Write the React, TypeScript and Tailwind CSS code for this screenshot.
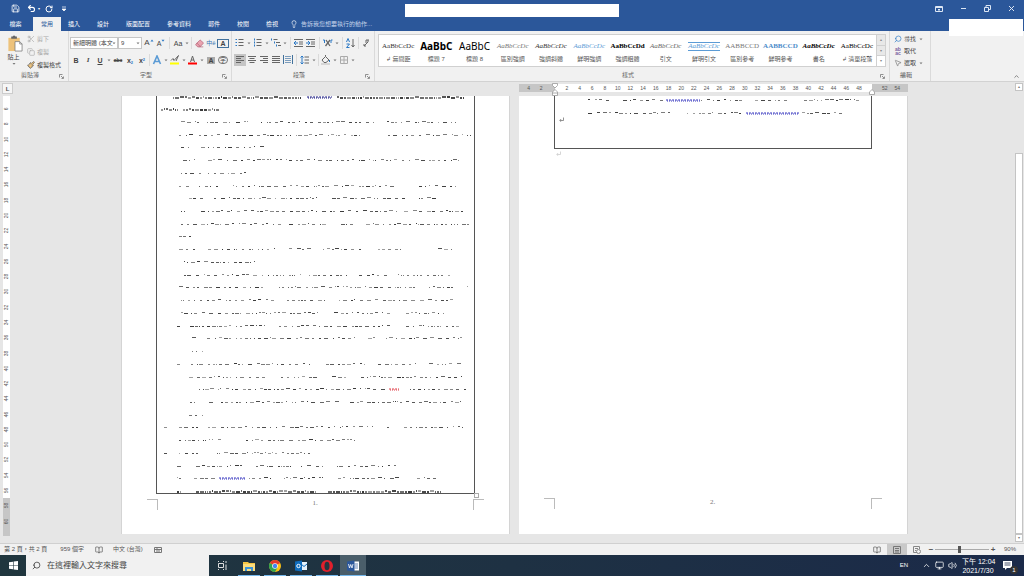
import React from 'react';
import {
  Search,
  Scissors,
  Copy,
  Paintbrush,
  Lightbulb,
  Save,
  Undo2,
  RotateCw,
  ChevronUp,
  Volume2,
  Monitor,
  Eraser,
  MousePointer2,
  BookOpen,
} from 'lucide-react';

const tabs = ['插入', '設計', '版面配置', '參考資料', '郵件', '校閱', '檢視'];

const styles = [
  { name: '↲ 無間距', sample: 'AaBbCcDc', look: 'text-[7px] text-[#333]' },
  { name: '標題 7', sample: 'AaBbC', look: 'font-["Noto_Sans"] text-[10px] font-bold text-black' },
  { name: '標題 8', sample: 'AaBbC', look: 'font-["Noto_Sans"] text-[10px] text-black' },
  { name: '區別強調', sample: 'AaBbCcDc', look: 'text-[7px] italic text-[#777]' },
  { name: '強調斜體', sample: 'AaBbCcDc', look: 'text-[7px] italic text-[#333]' },
  { name: '鮮明強調', sample: 'AaBbCcDc', look: 'text-[7px] italic text-[#5b9bd5]' },
  { name: '強調粗體', sample: 'AaBbCcDd', look: 'text-[7px] font-bold text-black' },
  { name: '引文', sample: 'AaBbCcDc', look: 'text-[7px] italic text-[#666]' },
  { name: '鮮明引文', sample: 'AaBbCcDc', look: 'text-[7px] italic text-[#5b9bd5] border-y border-[#5b9bd5]' },
  { name: '區別參考', sample: 'AABBCCD', look: 'text-[7px] text-[#777]' },
  { name: '鮮明參考', sample: 'AABBCCD', look: 'text-[7px] font-bold text-[#4a8bc9]' },
  { name: '書名', sample: 'AaBbCcDc', look: 'text-[7px] font-bold italic text-black' },
  { name: '↲ 清單段落', sample: 'AaBbCcDc', look: 'text-[7px] text-black' },
];

// each row: [start, end] stretches of ink, measured from the table border
const firstPage: number[][][] = [
  [[24, 44], [50, 74], [79, 92], [104, 218], [230, 299]],
  [[22, 37], [42, 63], [68, 204], [231, 314]],
  [[24, 34], [44, 108]],
  [[26, 38], [51, 302]],
  [[24, 44], [51, 89]],
  [[22, 34], [42, 62], [76, 239], [262, 302]],
  [[32, 46], [57, 160], [175, 250], [262, 280]],
  [[24, 30], [44, 241], [247, 306]],
  [[24, 124], [132, 171], [184, 196], [209, 314]],
  [[22, 38]],
  [[22, 39], [51, 119], [132, 154], [166, 209], [221, 244], [281, 297]],
  [[27, 99]],
  [[27, 144], [152, 191], [202, 230], [241, 296]],
  [[22, 109], [122, 259], [272, 296], [310, 314]],
  [[24, 117], [130, 170], [182, 296]],
  [[24, 162], [177, 234], [249, 289]],
  [[20, 23], [33, 109], [122, 234], [249, 305]],
  [[35, 39], [50, 199], [211, 218], [229, 305]],
  [[35, 46]],
  [[20, 24], [34, 154], [169, 208], [221, 259], [272, 305]],
  [[32, 110], [124, 162], [175, 189], [204, 305]],
  [[42, 229], [253, 310]],
  [[33, 39], [52, 57], [64, 182], [193, 306]],
  [[32, 46]],
  [[7, 10], [22, 41], [51, 216], [230, 234], [247, 306]],
  [[22, 64], [89, 199]],
  [[7, 10], [22, 41], [60, 154]],
  [[20, 24], [39, 89], [99, 134], [144, 166], [180, 240]],
  [[20, 24], [37, 59], [92, 114], [127, 169], [181, 247], [260, 284]],
  [[20, 24], [39, 159], [171, 284]],
];

const marksOf = (spans: number[][], seed: number, dense: boolean) => {
  const marks: { x: number; y: number; w: number; o: number }[] = [];
  let s = seed * 7919 + 13;
  const next = () => {
    s = (s * 1103515245 + 12345) % 2147483648;
    return s / 2147483648;
  };
  spans.forEach(([from, to]) => {
    let x = from;
    while (x < to) {
      const w = Math.min(to - x, 1 + Math.floor(next() * 4));
      marks.push({ x, y: next() > 0.75 ? 0 : 1, w, o: 0.4 + next() * 0.5 });
      x += w + (dense ? 1 : 1 + Math.floor(next() * 5));
    }
  });
  return marks;
};

type InkProps = { spans: number[][]; seed: number; dense?: boolean; squiggle?: [number, number, string] };

const Ink: React.FC<InkProps> = ({ spans, seed, dense = false, squiggle }) => (
  <svg className="block h-[3px] w-full" aria-hidden="true">
    {marksOf(spans, seed, dense).map((m, i) => (
      <rect key={i} x={m.x} y={m.y} width={m.w} height={dense ? 2 : 1} fill="#222" opacity={m.o} />
    ))}
    {squiggle && (
      <g fill="none" stroke={squiggle[2]}>
        <path d={`M${squiggle[0]} 1H${squiggle[1]}`} strokeWidth="1" strokeDasharray="2 1" />
        <path d={`M${squiggle[0] + 1} 2H${squiggle[1]}`} strokeWidth="1" strokeDasharray="1 1" />
      </g>
    )}
  </svg>
);

const Caret = () => (
  <svg viewBox="0 0 6 12" className="h-3 w-[6px] shrink-0" aria-hidden="true">
    <path d="M1.500 5.500h3L3 7.200z" fill="#777" />
  </svg>
);

const Sep = ({ wide = false }: { wide?: boolean }) => (
  <span className={`flex h-3 shrink-0 justify-center ${wide ? 'w-[5px]' : 'w-[3px]'}`}>
    <span className="w-px bg-[#dadada]" />
  </span>
);

type ToolProps = { label: string; active?: boolean; children: React.ReactNode };

const Tool: React.FC<ToolProps> = ({ label, active, children }) => (
  <button
    type="button"
    aria-label={label}
    className={`flex h-3 w-3 shrink-0 items-center justify-center text-[7px] leading-none text-[#444] ${active ? 'bg-[#c5c5c5]' : ''}`}
  >
    {children}
  </button>
);

const Glyph = ({ children }: { children: React.ReactNode }) => (
  <svg viewBox="0 0 10 10" className="h-[10px] w-[10px]" fill="none" stroke="#666" strokeWidth="1" aria-hidden="true">
    {children}
  </svg>
);

const Launcher = () => (
  <svg viewBox="0 0 5 5" className="absolute right-1 bottom-[2px] h-[5px] w-[5px]" fill="none" stroke="#777" strokeWidth="0.8" aria-hidden="true">
    <path d="M.5 3.500v-3h3M2 2l2 2M4.500 2.500v2h-2" />
  </svg>
);

const ReturnMark = ({ className }: { className: string }) => (
  <svg viewBox="0 0 5 5" className={`h-[5px] w-[5px] ${className}`} fill="none" stroke="currentColor" strokeWidth="0.8" aria-hidden="true">
    <path d="M4.500.500v3H1M2.200 2L.7 3.500l1.500 1.200" />
  </svg>
);

type GroupProps = { title: string; width: string; launcher?: boolean; children: React.ReactNode };

const Group: React.FC<GroupProps> = ({ title, width, launcher = true, children }) => (
  <section aria-label={title} className={`flex flex-col border-r border-[#dadada] ${width}`}>
    <div className="h-[39px]">{children}</div>
    <div className="relative flex h-[11px] items-center justify-center pr-2 text-[#666]">
      {title}
      {launcher && <Launcher />}
    </div>
  </section>
);

const TitleBar = () => (
  <header className="relative bg-[#2b579a] text-white">
    <div className="grid h-[17px] grid-cols-3 items-center">
      <div className="flex items-center pl-[11px]">
        <button type="button" aria-label="儲存檔案"><Save size={9} /></button>
        <button type="button" aria-label="復原" className="ml-[7px]"><Undo2 size={9} strokeWidth={3} /></button>
        <span className="ml-[2px] text-[4px]">▾</span>
        <button type="button" aria-label="重複" className="ml-[5px]"><RotateCw size={8} strokeWidth={3} /></button>
        <svg viewBox="0 0 4 6" className="ml-[9px] h-[6px] w-1" aria-hidden="true">
          <path d="M0 1h4M0 3h4L2 5z" stroke="#fff" strokeWidth="0.7" fill="#fff" />
        </svg>
      </div>
      <div className="mx-auto mt-1 h-[13px] w-[214px] bg-white" />
      <div className="flex items-center justify-end gap-[17px] pr-[9px] text-[#dce6f4]">
        <button type="button" aria-label="功能區顯示選項">
          <svg viewBox="0 0 8 8" className="h-2 w-2" fill="none" stroke="currentColor">
            <path d="M.5 1.500h7v5h-7zM.5 2.500h7M4 6V4M3 5l1-1 1 1" />
          </svg>
        </button>
        <button type="button" aria-label="最小化">
          <svg viewBox="0 0 7 7" className="h-[7px] w-[7px]" stroke="currentColor"><path d="M1 3.500h5" /></svg>
        </button>
        <button type="button" aria-label="往下還原">
          <svg viewBox="0 0 7 7" className="h-[7px] w-[7px]" fill="none" stroke="currentColor"><path d="M.5 2.500h4v4h-4zM2 2.500v-2h4.500v4H4.500" /></svg>
        </button>
        <button type="button" aria-label="關閉">
          <svg viewBox="0 0 7 7" className="h-[7px] w-[7px]" stroke="currentColor"><path d="M1 1l5 5M6 1L1 6" /></svg>
        </button>
      </div>
    </div>
    <nav className="flex h-[14px] items-stretch text-[6px]">
      <button type="button" className="w-[33px] pr-[2px]">檔案</button>
      <button type="button" className="w-7 bg-[#f1f1f1] text-[#2b579a]">常用</button>
      <div className="flex items-center gap-[17px] pl-[7px]">
        {tabs.map((t) => (
          <button key={t} type="button">{t}</button>
        ))}
      </div>
      <label className="ml-3 flex items-center gap-[3px] text-[#c5d4ea]">
        <Lightbulb size={8} className="text-white" />
        <input
          aria-label="操作說明搜尋"
          placeholder="告訴我您想要執行的動作..."
          className="w-20 bg-transparent outline-none placeholder:text-[#c5d4ea]"
        />
      </label>
    </nav>
    <div className="absolute top-[19px] right-px z-10 h-[17px] w-[74px] bg-white" />
  </header>
);

const Clipboard = () => (
  <div className="flex pt-1">
    <button type="button" className="flex w-[27px] flex-col items-center text-[#444]">
      <svg viewBox="0 0 16 18" className="ml-[2px] h-[17px] w-4" aria-hidden="true">
        <path d="M1 3h12v14H1z" fill="#edc27b" />
        <path d="M4 1.500h1.500Q7-.5 8.500 1.500H10V4H4z" fill="#666" />
        <path d="M8 7h5l2.500 2.500V17H8z" fill="#fff" stroke="#777" strokeWidth=".8" />
        <path d="M13 7v2.500h2.500" fill="none" stroke="#777" strokeWidth=".8" />
      </svg>
      <span className="mt-px leading-[8px]">貼上</span>
      <svg viewBox="0 0 4 4" className="mt-px h-1 w-1"><path d="M.5 1h3L2 2.800z" fill="#777" /></svg>
    </button>
    <div className="flex flex-col gap-1 text-[#aaa]">
      <button type="button" className="flex h-2 items-center gap-[2px]"><Scissors size={8} />剪下</button>
      <button type="button" className="mt-px flex h-2 items-center gap-[2px]"><Copy size={8} />複製</button>
      <button type="button" className="mt-px flex h-2 items-center gap-[2px] text-[#444]">
        <Paintbrush size={8} className="fill-[#edc27b] text-[#555]" />複製格式
      </button>
    </div>
  </div>
);

const FontTools = () => (
  <div className="flex flex-col gap-[5px] pt-[6px] pl-px">
    <div className="flex">
      <div className="relative w-12">
        <select aria-label="字型" className="h-3 w-full appearance-none border border-[#c6c6c6] bg-white pl-[2px] text-[6px] text-[#444]">
          <option>新細明體 (本文</option>
        </select>
        <span className="pointer-events-none absolute top-0 right-px"><Caret /></span>
      </div>
      <div className="relative mr-px w-6">
        <select aria-label="字型大小" className="h-3 w-full appearance-none border border-[#c6c6c6] bg-white pl-[2px] text-[6px] text-[#444]">
          <option>9</option>
        </select>
        <span className="pointer-events-none absolute top-0 right-px"><Caret /></span>
      </div>
      <Tool label="放大字型">
        <span className="text-[8px]">A</span>
        <svg viewBox="0 0 4 8" className="h-2 w-1" fill="#2b78c5"><path d="M.5 2.500L2 .5l1.500 2z" /></svg>
      </Tool>
      <Tool label="縮小字型">
        <span>A</span>
        <svg viewBox="0 0 4 8" className="h-2 w-1" fill="#2b78c5"><path d="M.5.800L2 2.800 3.500.8z" /></svg>
      </Tool>
      <Sep wide />
      <Tool label="大小寫轉換">Aa</Tool>
      <Caret />
      <Sep />
      <Tool label="清除格式"><Eraser size={9} className="fill-[#e9a3b0] text-[#b5657a]" /></Tool>
      <Tool label="注音標示"><span className="text-[6px] text-[#3b78b5]">中ê</span></Tool>
      <Tool label="字元框線"><span className="border border-[#41719c] px-[2px] text-[7px] font-bold">A</span></Tool>
    </div>
    <div className="flex">
      <Tool label="粗體"><b>B</b></Tool>
      <Tool label="斜體"><i className="font-['Liberation_Serif',serif] font-bold">I</i></Tool>
      <Tool label="底線"><b className="underline">U</b></Tool>
      <Caret />
      <Tool label="刪除線"><b className="text-[5px] line-through">abc</b></Tool>
      <Tool label="下標"><b>x<sub className="text-[4px] text-[#2b78c5]">2</sub></b></Tool>
      <Tool label="上標"><b>x<sup className="text-[4px] text-[#2b78c5]">2</sup></b></Tool>
      <Sep />
      <Tool label="文字效果">
        <Glyph><path d="M1.500 9L5 1l3.500 8M3 6.500h4" stroke="#5b9bd5" strokeWidth="1.600" /></Glyph>
      </Tool>
      <Caret />
      <Tool label="文字醒目提示色彩">
        <Glyph><path d="M0 8.500h9" stroke="#ff0" strokeWidth="2" /><path d="M1 5.500l2-2 1 2 4.500-5-2.500 5.500" /></Glyph>
      </Tool>
      <Caret />
      <Tool label="字型色彩">
        <Glyph><path d="M0 8.500h9" stroke="#f00" strokeWidth="2" /><path d="M2.500 7L4.500 1l2 6M3 5h3" /></Glyph>
      </Tool>
      <Caret />
      <Tool label="字元網底"><b className="bg-[#aaa] px-px">A</b></Tool>
      <Tool label="圍繞字元"><span className="rounded-full border border-[#777] px-px text-[6px]">字</span></Tool>
    </div>
  </div>
);

const ParagraphTools = () => (
  <div className="flex flex-col gap-[5px] pt-[6px] pl-[2px]">
    <div className="flex">
      <Tool label="項目符號">
        <Glyph><path d="M3.500 1.500h5M3.500 4.500h5M3.500 7.500h5" /><path d="M.5 1.500H2M.5 4.500H2M.5 7.500H2" stroke="#2b78c5" /></Glyph>
      </Tool>
      <Caret />
      <Tool label="編號">
        <Glyph><path d="M3.500 1.500h5M3.500 4.500h5M3.500 7.500h5" /><path d="M1.500.500v2M1.500 3.500v2M1.500 6.500v2" stroke="#2b78c5" /></Glyph>
      </Tool>
      <Caret />
      <Tool label="多層次清單">
        <Glyph><path d="M2.500 1.500h4M5 4.500h4M7 7.500h3" /><path d="M.5.500v2M3.500 3.500v2M5.500 6.500v2" stroke="#2b78c5" /></Glyph>
      </Tool>
      <Caret />
      <Sep wide />
      <Tool label="減少縮排">
        <Glyph><path d="M0 1.500h9M5 4h4M5 6h4M0 8.500h9" /><path d="M4 5H0M2 3L0 5l2 2" stroke="#2b78c5" /></Glyph>
      </Tool>
      <Tool label="增加縮排">
        <Glyph><path d="M0 1.500h9M5 4h4M5 6h4M0 8.500h9" /><path d="M0 5h4M2 3l2 2-2 2" stroke="#2b78c5" /></Glyph>
      </Tool>
      <Sep wide />
      <Tool label="亞洲方式配置">
        <Glyph><path d="M2.500 8L7 2M3 2l4 6" strokeWidth="1.300" /><path d="M0 2h1.500v3M9.500 2H8v3" stroke="#2b78c5" /></Glyph>
      </Tool>
      <Caret />
      <Sep wide />
      <Tool label="排序">
        <Glyph><path d="M.5 4L2 .5 3.500 4M.5 6h3l-3 3.500h3" stroke="#2b78c5" /><path d="M7 1v8M5.500 7L7 9l1.500-2" /></Glyph>
      </Tool>
      <Sep />
      <Tool label="顯示/隱藏編輯標記">
        <Glyph><path d="M8 2H5v3M7 2v2L3 8M3 6v2h2" /></Glyph>
      </Tool>
    </div>
    <div className="flex">
      <Tool label="靠左對齊" active><Glyph><path d="M1 1.500h8M1 3.500h5M1 5.500h8M1 7.500h5" /></Glyph></Tool>
      <Tool label="置中"><Glyph><path d="M1 1.500h8M2.500 3.500h5M1 5.500h8M2.500 7.500h5" /></Glyph></Tool>
      <Tool label="靠右對齊"><Glyph><path d="M1 1.500h8M4 3.500h5M1 5.500h8M4 7.500h5" /></Glyph></Tool>
      <Tool label="左右對齊"><Glyph><path d="M1 1.500h8M1 3.500h8M1 5.500h8M1 7.500h8" /></Glyph></Tool>
      <Tool label="分散對齊">
        <Glyph><path d="M.5 0v9M9.500 0v9" stroke="#41719c" /><path d="M2 1.500h6M2 3.500h6M2 5.500h6M2 7.500h6" stroke="#7b9cbc" /></Glyph>
      </Tool>
      <Sep wide />
      <Tool label="行距">
        <Glyph><path d="M4.500 2H9M4.500 5H9M4.500 8H9" /><path d="M2 1v8M.5 2.500L2 1l1.500 1.500M.5 7.500L2 9l1.500-1.500" stroke="#2b78c5" /></Glyph>
      </Tool>
      <Caret />
      <Sep />
      <Tool label="網底">
        <Glyph><path d="M1 5l3.500-3.500L8 5 5 7.500H3zM4.500 1.500V0" /><path d="M8.500 5v2" stroke="#2b78c5" /><path d="M0 9h9" stroke="#bbb" /></Glyph>
      </Tool>
      <Caret />
      <Tool label="框線"><Glyph><path d="M1.500 1.500h7v7h-7zM5 1.500v7M1.500 5h7" stroke="#aaa" /></Glyph></Tool>
      <Caret />
    </div>
  </div>
);

const Gallery = () => (
  <div className="px-[3px] pt-[3px]">
    <div className="flex h-[33px] border border-[#d0d0d0] bg-white">
      <div className="grid min-w-0 flex-1 grid-cols-13">
        {styles.map((s) => (
          <button key={s.name} type="button" className="flex min-w-0 flex-col items-center">
            <span className="flex h-[19px] items-center pt-[3px]">
              <span className={`font-["Liberation_Serif",serif] leading-none whitespace-nowrap ${s.look}`}>{s.sample}</span>
            </span>
            <span className="leading-[10px] whitespace-nowrap text-[#555]">{s.name}</span>
          </button>
        ))}
      </div>
      <div className="flex w-[9px] flex-col border-l border-[#d0d0d0] text-[4px] text-[#888]">
        <button type="button" aria-label="上一列" className="flex-1 bg-[#e8e8e8]">▴</button>
        <button type="button" aria-label="下一列" className="flex-1 border-y border-[#d0d0d0] bg-[#e8e8e8]">▾</button>
        <button type="button" aria-label="其他" className="flex-1">▾</button>
      </div>
    </div>
  </div>
);

const Ribbon = () => (
  <div className="flex h-[51px] border-b border-[#d2d2d2] bg-[#f1f1f1] text-[6px]">
    <Group title="剪貼簿" width="w-[69px] shrink-0"><Clipboard /></Group>
    <Group title="字型" width="w-[163px] shrink-0"><FontTools /></Group>
    <Group title="段落" width="w-[143px] shrink-0"><ParagraphTools /></Group>
    <Group title="樣式" width="min-w-0 flex-1"><Gallery /></Group>
    <Group title="編輯" width="w-[41px] shrink-0" launcher={false}>
      <div className="flex flex-col gap-1 pt-1 pl-1 text-[#444]">
        <button type="button" className="flex h-2 items-center gap-[2px]">
          <Search size={8} className="-scale-x-100 text-[#2b78c5]" />尋找<Caret />
        </button>
        <button type="button" className="flex h-2 items-center gap-[2px]">
          <span className="w-2 text-[5px] leading-[4px] font-bold text-[#7a5fa0]">ab<br />ac</span>取代
        </button>
        <button type="button" className="flex h-2 items-center gap-[2px]">
          <MousePointer2 size={8} className="text-[#777]" />選取<Caret />
        </button>
      </div>
    </Group>
    <div className="flex w-[93px] shrink-0 items-end justify-end pr-[4px] pb-px text-[#777]">
      <button type="button" aria-label="摺疊功能區"><ChevronUp size={7} strokeWidth={3} /></button>
    </div>
  </div>
);

const evens = (from: number, to: number) => {
  const out: number[] = [];
  for (let n = from; n <= to; n += 2) out.push(n);
  return out;
};

const Ticks = ({ values, className }: { values: number[]; className: string }) => (
  <div className={`flex h-full items-center ${className}`}>
    {values.map((n) => (
      <span key={n} className="w-0 flex-1 text-center whitespace-nowrap">{n}</span>
    ))}
  </div>
);

const Ruler = () => (
  <div className="relative flex h-[8px] w-[389px] text-[5px] leading-none text-[#555]">
    <Ticks values={[4, 2]} className="w-9 bg-[#c6c6c6] pr-[7px] pl-1" />
    <Ticks values={evens(2, 48)} className="flex-1 bg-white px-[6px]" />
    <Ticks values={[52, 54]} className="w-9 bg-[#c6c6c6] pr-1 pl-[7px]" />
    <svg viewBox="0 0 6 13" className="absolute -top-px left-[33px] h-[13px] w-[6px]" fill="#fff" stroke="#999" strokeWidth=".8">
      <path d="M.5.500h5v2L3 5 .5 2.500zM.5 12.500V9L3 6.500 5.500 9v3.500zM.5 10h5" />
    </svg>
    <svg viewBox="0 0 6 6" className="absolute top-[5px] right-[33px] h-[6px] w-[6px]" fill="#fff" stroke="#999" strokeWidth=".8">
      <path d="M.5 5.500V3L3 .5 5.500 3v2.500z" />
    </svg>
  </div>
);

// corner marks of the text area with the page number between them
const PageFoot = ({ number }: { number: number }) => (
  <div className="flex h-3 items-start justify-between px-[25px] text-[7px] leading-[8px] text-[#777]">
    <span className="h-[11px] w-[11px] border-t border-r border-[#bbb]" />
    <span className="font-['Liberation_Serif',serif]">{number}.</span>
    <span className="h-[11px] w-[11px] border-t border-l border-[#bbb]" />
  </div>
);

const squiggles: Record<number, [number, number, string]> = {
  21: [232, 242, '#e0404a'],
  28: [62, 89, '#3a3ac0'],
};

const PageOne = () => (
  <article className="flex w-[389px] flex-col border-x border-[#d4d4d4] bg-white" aria-label="第 1 頁">
    <div className="relative mx-[34px] h-[398px] border-x border-b border-[#555]">
      <Ink spans={[[16, 144], [180, 308]]} seed={91} dense squiggle={[150, 175, '#1a1a80']} />
      <div className="mt-[9px] h-[3px]">
        <Ink spans={[[4, 21], [26, 62]]} seed={47} dense />
      </div>
      <div className="mt-[5px] flex h-[382px] flex-col">
        {firstPage.map((spans, i) => (
          <div key={i} className="flex min-h-0 flex-1 items-center">
            <Ink spans={spans} seed={i + 1} dense={i === 29} squiggle={squiggles[i]} />
          </div>
        ))}
      </div>
      <span className="absolute -right-[5px] -bottom-[5px] h-[5px] w-[5px] border border-[#aaa] bg-white" />
    </div>
    <div className="pt-[5px]"><PageFoot number={1} /></div>
  </article>
);

const PageTwo = () => (
  <article className="flex w-[389px] flex-col border-r border-[#d4d4d4] bg-white" aria-label="第 2 頁">
    <div className="mx-[35px] h-[53px] border-x border-b border-[#555]">
      <div className="pt-[3px]">
        <Ink spans={[[33, 55], [68, 108], [146, 187], [200, 232], [249, 304]]} seed={61} squiggle={[111, 145, '#3a3ac0']} />
      </div>
      <div className="pt-[10px]">
        <Ink spans={[[33, 118], [132, 186], [247, 287]]} seed={62} squiggle={[191, 244, '#3a3ac0']} />
      </div>
      <ReturnMark className="mt-[2px] ml-1 text-[#777]" />
    </div>
    <ReturnMark className="mt-[2px] ml-[37px] text-[#ccc]" />
    <div className="mt-auto pb-6"><PageFoot number={2} /></div>
  </article>
);

const Workspace = () => (
  <main className="flex min-h-0 flex-1 bg-[#e6e6e6]">
    <div className="flex w-[13px] shrink-0 flex-col">
      <div className="flex h-[14px] items-start pt-px pl-[2px]">
        <button type="button" aria-label="定位點" className="h-[11px] w-[11px] border border-[#ccc] bg-[#f6f6f6] text-[6px] leading-none font-bold text-[#555]">L</button>
      </div>
      <div className="ml-[3px] flex h-[440px] w-[7px] flex-col bg-linear-to-b from-white from-[402px] to-[#c6c6c6] to-[402px] pt-[5px] pb-[7px] text-[5px] leading-none text-[#555]">
        {evens(6, 60).map((n) => (
          <span key={n} className="flex min-h-0 w-full flex-1 rotate-180 items-center justify-center [writing-mode:vertical-rl]">{n}</span>
        ))}
      </div>
    </div>
    <div className="flex min-w-0 flex-1 flex-col overflow-hidden">
      <div className="flex h-[14px] shrink-0 justify-center gap-[9px] pt-[2px]">
        <div className="w-[389px]" />
        <Ruler />
      </div>
      <div className="flex min-h-0 flex-1 justify-center gap-[9px] pb-[9px]">
        <PageOne />
        <PageTwo />
      </div>
    </div>
    <div className="flex w-[9px] shrink-0 flex-col pt-px pr-px pb-px text-[4px] leading-none text-[#777]">
      <button type="button" aria-label="向上捲動" className="h-2 border border-[#c4c4c4] bg-white">▴</button>
      <div className="h-[62px]" />
      <div className="flex-1 border border-[#c4c4c4] bg-white" />
      <button type="button" aria-label="向下捲動" className="h-2 border border-[#c4c4c4] bg-white">▾</button>
    </div>
  </main>
);

const StatusBar = () => (
  <footer className="flex h-3 items-center border-t border-[#d0d0d0] bg-[#f1f1f1] pr-2 pl-1 text-[6px] text-[#555]">
    <span>第 2 頁，共 2 頁</span>
    <span className="ml-[13px]">959 個字</span>
    <BookOpen size={8} className="ml-[11px]" />
    <span className="ml-[10px]">中文 (台灣)</span>
    <svg viewBox="0 0 8 8" className="ml-[11px] h-2 w-2" fill="none" stroke="#777" aria-hidden="true">
      <path d="M.5 1.500h7v5h-7zM.5 3.500h7M3 1.500v5M5 3.500v3" />
    </svg>
    <div className="ml-auto flex h-full items-center">
      <button type="button" aria-label="閱讀模式" className="flex h-full w-5 items-center justify-center"><BookOpen size={8} /></button>
      <button type="button" aria-label="整頁模式" className="flex h-full w-5 items-center justify-center bg-[#c9c9c9]">
        <svg viewBox="0 0 8 8" className="h-2 w-2" fill="none" stroke="#777"><path d="M.5.500h7v7h-7zM2 2.500h4M2 4.500h4M2 6h4" /></svg>
      </button>
      <button type="button" aria-label="Web 版面配置" className="flex h-full w-5 items-center justify-center">
        <svg viewBox="0 0 8 8" className="h-2 w-2" fill="none" stroke="#888"><path d="M4 6.500H.5v-6h6V3M2 2.500h3M2 4.500h1" /><circle cx="5.500" cy="5.500" r="2" /></svg>
      </button>
      <button type="button" aria-label="縮小" className="w-2 text-[8px] leading-none font-bold">−</button>
      <input
        type="range"
        aria-label="縮放"
        min={10}
        max={190}
        defaultValue={90}
        className="h-2 w-[54px] appearance-none bg-transparent [&::-webkit-slider-runnable-track]:h-px [&::-webkit-slider-runnable-track]:bg-[#aaa] [&::-webkit-slider-thumb]:-mt-[3px] [&::-webkit-slider-thumb]:h-[7px] [&::-webkit-slider-thumb]:w-[3px] [&::-webkit-slider-thumb]:appearance-none [&::-webkit-slider-thumb]:bg-[#555]"
      />
      <button type="button" aria-label="放大" className="w-2 text-[8px] leading-none font-bold">+</button>
      <span className="ml-[7px]">90%</span>
    </div>
  </footer>
);

const apps = [
  {
    name: '檔案總管',
    icon: (
      <>
        <path d="M0 2h5l1 1h6v8H0z" fill="#f5c543" />
        <path d="M0 4h12v7H0z" fill="#fbdc7c" />
        <path d="M2 7h8v4H8V9H4v2H2z" fill="#3b93d6" />
      </>
    ),
  },
  {
    name: 'Chrome',
    icon: (
      <>
        <circle cx="6" cy="6" r="6" fill="#fbc116" />
        <path d="M6 6L.8 3A6 6 0 0 1 11.200 3z" fill="#e33b2e" />
        <path d="M6 6L.8 3A6 6 0 0 0 6 12l2.500-4.500z" fill="#31a350" />
        <circle cx="6" cy="6" r="2.800" fill="#fff" />
        <circle cx="6" cy="6" r="2.200" fill="#4285f4" />
      </>
    ),
  },
  {
    name: 'Outlook',
    icon: (
      <>
        <path d="M5 2h7v8H5z" fill="#e8f2fb" />
        <path d="M6 4l3 2.500L12 4" fill="none" stroke="#0f6cbd" />
        <path d="M0 1.500L7 .5v11L0 10.500z" fill="#0f6cbd" />
        <circle cx="3.500" cy="6" r="1.700" fill="none" stroke="#fff" />
      </>
    ),
  },
  {
    name: 'Opera',
    icon: (
      <>
        <circle cx="6" cy="6" r="6" fill="#e0202c" />
        <ellipse cx="6" cy="6" rx="2.500" ry="4.300" fill="#22363f" />
      </>
    ),
  },
  {
    name: 'Word',
    icon: (
      <>
        <path d="M6 1.500h6v9H6z" fill="#fff" />
        <path d="M7.500 4H11M7.500 6H11M7.500 8H11" stroke="#2b579a" strokeWidth=".7" />
        <path d="M0 1.500L7.500.500v11L0 10.500z" fill="#2b579a" />
        <path d="M1.500 4l1 4 1.200-3.500L5 8l1-4" fill="none" stroke="#fff" strokeWidth=".8" />
      </>
    ),
  },
];

const Taskbar = () => (
  <div className="flex h-[21px] items-stretch bg-linear-to-r from-[#20363e] via-[#1e3143] to-[#1b2a49] text-white">
    <button type="button" aria-label="開始" className="flex w-[26px] items-center justify-center">
      <svg viewBox="0 0 9 9" className="h-[9px] w-[9px]" fill="#fff">
        <path d="M0 1.200L4 .7v3.500H0zM4.600.6L9 0v4.200H4.600zM0 4.800h4v3.500L0 7.800zM4.600 4.800H9V9l-4.400-.6z" />
      </svg>
    </button>
    <label className="flex w-[183px] items-center gap-[6px] bg-[#f1f1f1] pl-[6px] text-[#333]">
      <Search size={9} className="-scale-x-100" />
      <input
        aria-label="搜尋"
        placeholder="在這裡輸入文字來搜尋"
        className="min-w-0 flex-1 bg-transparent text-[8px] outline-none placeholder:text-[#444]"
      />
    </label>
    <button type="button" aria-label="工作檢視" className="flex w-[27px] items-center justify-center">
      <svg viewBox="0 0 9 9" className="h-[9px] w-[9px]" fill="none" stroke="#ddd">
        <path d="M.5 2.500h5v4h-5zM.5 1V0M5.500 1V0M.5 8v1M5.500 8v1M8 0v2M8 3.500v5.500" />
      </svg>
    </button>
    {apps.map(({ name, icon }) => (
      <button
        key={name}
        type="button"
        aria-label={name}
        className={`relative flex w-[26px] items-center justify-center ${name === 'Word' ? 'bg-[#4a5e6a]' : ''}`}
      >
        <svg viewBox="0 0 12 12" className="h-3 w-3">{icon}</svg>
        <span className={`absolute bottom-0 h-px bg-[#76b9ed] ${name === 'Word' ? 'inset-x-0' : 'inset-x-[2px]'}`} />
      </button>
    ))}
    <div className="ml-auto flex items-center pr-[9px]">
      <span className="mr-[14px] text-[6px]">EN</span>
      <ChevronUp size={9} className="mr-1" />
      <Monitor size={9} className="mr-1" />
      <Volume2 size={9} className="mr-[5px]" />
      <div className="mr-[9px] w-8 text-center text-[7px] leading-[9px] whitespace-nowrap">
        <div>下午 12:04</div>
        <div>2021/7/30</div>
      </div>
      <button type="button" aria-label="通知" className="relative">
        <svg viewBox="0 0 12 12" className="h-3 w-3" fill="#fff">
          <path d="M0 1h9v7H4L2 10V8H0z" />
          <path d="M1.500 3h6M1.500 5h6" stroke="#1b2a49" strokeWidth=".8" />
        </svg>
        <span className="absolute -right-[3px] -bottom-[2px] h-2 w-2 rounded-full bg-[#333] text-center text-[6px] leading-[8px]">1</span>
      </button>
    </div>
  </div>
);

const App: React.FC = () => (
  <div className="flex h-screen flex-col overflow-hidden font-['Liberation_Sans','Noto_Sans_CJK_TC',sans-serif]">
    <TitleBar />
    <Ribbon />
    <Workspace />
    <StatusBar />
    <Taskbar />
  </div>
);

export default App;
